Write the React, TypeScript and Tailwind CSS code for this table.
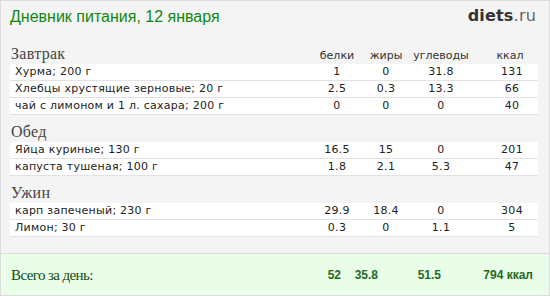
import React from "react";

type Item = { name: string; p: string; f: string; c: string; k: string };

const sections: { title: string; items: Item[] }[] = [
  {
    title: "Завтрак",
    items: [
      { name: "Хурма; 200 г", p: "1", f: "0", c: "31.8", k: "131" },
      { name: "Хлебцы хрустящие зерновые; 20 г", p: "2.5", f: "0.3", c: "13.3", k: "66" },
      { name: "чай с лимоном и 1 л. сахара; 200 г", p: "0", f: "0", c: "0", k: "40" },
    ],
  },
  {
    title: "Обед",
    items: [
      { name: "Яйца куриные; 130 г", p: "16.5", f: "15", c: "0", k: "201" },
      { name: "капуста тушеная; 100 г", p: "1.8", f: "2.1", c: "5.3", k: "47" },
    ],
  },
  {
    title: "Ужин",
    items: [
      { name: "карп запеченый; 230 г", p: "29.9", f: "18.4", c: "0", k: "304" },
      { name: "Лимон; 30 г", p: "0.3", f: "0", c: "1.1", k: "5" },
    ],
  },
];

const grid = "grid grid-cols-[1fr_50px_48px_62px_66px]";
const serif = "font-['Liberation_Serif',serif]";
const sans = "font-['DejaVu_Sans',sans-serif]";

function Row({ it }: { it: Item }) {
  return (
    <div
      className={`${grid} ${sans} h-[17px] bg-white border-b border-[#e2e2e2] text-[11px] leading-[16px] text-[#222] whitespace-nowrap`}
    >
      <div className="pl-[5px] tracking-[0.25px]">{it.name}</div>
      <div className="text-center tracking-[0.3px]">{it.p}</div>
      <div className="text-center tracking-[0.3px]">{it.f}</div>
      <div className="text-center tracking-[0.3px]">{it.c}</div>
      <div className="text-center pl-[14px] tracking-[0.3px]">{it.k}</div>
    </div>
  );
}

export default function App() {
  return (
    <div className="w-[550px] h-[296px] bg-[#f4f4f4] border border-[#dcdcdc] flex flex-col overflow-hidden">
      <div className="h-[36px] flex items-start justify-between pl-[9px] pr-[13px]">
        <div className="pt-[6px] font-['Liberation_Sans',sans-serif] text-[16px] leading-[20px] text-[#118711]">
          Дневник питания, 12 января
        </div>
        <div className={`pt-[5px] ${sans} text-[16px] leading-[20px] tracking-[0.2px]`}>
          <span className="font-bold text-[#333]">diets</span>
          <span className="text-[#666]">.ru</span>
        </div>
      </div>
      <div className="pl-[9px] pr-[11px] flex flex-col">
        {sections.map((s, i) => (
          <div key={s.title}>
            {i === 0 ? (
              <div className={`${grid} h-[27px] items-baseline`}>
                <div className={`${serif} pl-[1px] pt-[9px] text-[16px] leading-[15px] tracking-[0.3px] text-[#444]`}>
                  {s.title}
                </div>
                <div className={`${sans} text-center text-[11px] text-[#333]`}>белки</div>
                <div className={`${sans} text-center text-[11px] text-[#333]`}>жиры</div>
                <div className={`${sans} text-center text-[11px] text-[#333]`}>углеводы</div>
                <div className={`${sans} text-center pl-[10px] text-[11px] text-[#333]`}>ккал</div>
              </div>
            ) : (
              <div className={`${serif} h-[27px] pl-[1px] pt-[9px] text-[16px] leading-[15px] tracking-[0.3px] text-[#444]`}>
                {s.title}
              </div>
            )}
            {s.items.map((it) => (
              <Row key={it.name} it={it} />
            ))}
          </div>
        ))}
      </div>
      <div className="mt-auto h-[42px] border-t border-[#dcdcdc] bg-[#e9fde9] flex items-center pl-[10px] pr-[16px]">
        <div className={`${serif} flex-1 text-[15px] leading-[16px] tracking-[-0.6px] text-[#0f4f0f]`}>
          Всего за день:
        </div>
        <div className="flex items-center font-['Liberation_Sans',sans-serif] font-bold text-[12px] text-[#246a24] whitespace-nowrap">
          <div className="w-[40px] text-right">52</div>
          <div className="w-[37px] text-right">35.8</div>
          <div className="w-[63px] text-right">51.5</div>
          <div className="w-[92px] text-right">794 ккал</div>
        </div>
      </div>
    </div>
  );
}
